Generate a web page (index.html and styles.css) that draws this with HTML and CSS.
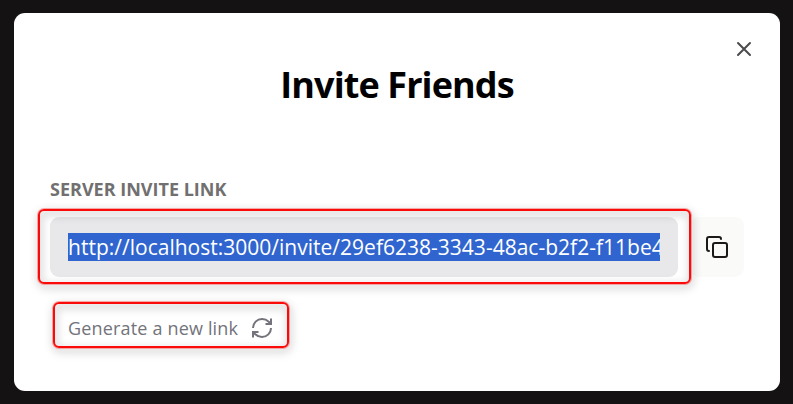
FILE: index.html
```html
<!DOCTYPE html>
<html lang="en">
<head>
<meta charset="utf-8">
<title>Invite Friends</title>
<link rel="stylesheet" href="styles.css">
</head>
<body>
<main class="dialog">
  <button class="close" aria-label="Close">
    <svg viewBox="0 0 24 24" width="24" height="24"><path d="M18 6 6 18M6 6l12 12"/></svg>
  </button>
  <h1 class="title"><span>Invite Friends</span></h1>
  <section class="content">
    <div class="label"><span>Server invite link</span></div>
    <div class="row">
      <div class="field"><div class="clip"><span class="selected">http://localhost:3000/invite/29ef6238-3343-48ac-b2f2-f11be4</span></div></div>
      <button class="copy" aria-label="Copy">
        <svg viewBox="0 0 24 24" width="24" height="24"><rect x="8" y="8" width="14" height="14" rx="2"/><path d="M4 16c-1.1 0-2-.9-2-2V4c0-1.1.9-2 2-2h10c1.1 0 2 .9 2 2"/></svg>
      </button>
      <div class="mark mark-field"></div>
    </div>
    <button class="generate">
      <span>Generate a new link</span>
      <svg class="refresh" viewBox="0 0 24 24" width="24" height="24"><path d="M3 12a9 9 0 0 1 9-9 9.75 9.75 0 0 1 6.74 2.74L21 8"/><path d="M21 2.5V8h-5.5"/><path d="M21 12a9 9 0 0 1-9 9 9.75 9.75 0 0 1-6.74-2.74L3 16"/><path d="M8.5 16H3v5.5"/></svg>
      <i class="mark mark-generate"></i>
    </button>
  </section>
</main>
</body>
</html>
```
FILE: styles.css
```css
* { box-sizing: border-box; }
body {
  margin: 0;
  height: 404px;
  padding: 13px 13px 13px 14px;
  background: #141213;
  font-family: "Open Sans", "Noto Sans", sans-serif;
  overflow: hidden;
}
button {
  border: 0;
  padding: 0;
  background: none;
  font: inherit;
}
svg {
  display: block;
  fill: none;
  stroke: currentColor;
  stroke-width: 2;
  stroke-linecap: round;
  stroke-linejoin: round;
}
.dialog {
  position: relative;
  height: 378px;
  padding-top: 48px;
  background: #fff;
  border-radius: 11px;
}
.close {
  position: absolute;
  top: 24px;
  right: 24px;
  color: #4b4b4f;
}
.title {
  margin: 0;
  line-height: 48px;
  font-size: 36px;
  font-weight: 700;
  letter-spacing: -0.9px;
  text-align: center;
  color: #000;
}
.content { padding: 68px 36px 0; }
.label {
  height: 24px;
  line-height: 24px;
  font-size: 18px;
  font-weight: 700;
  text-transform: uppercase;
  color: #716f70;
}
.row {
  position: relative;
  display: flex;
  gap: 12px;
  margin-top: 16px;
}
.field {
  flex: 1;
  min-width: 0;
  height: 60px;
  padding: 16px 18px;
  border-radius: 9px;
  background: #e8e8ea;
}
.clip {
  height: 28px;
  overflow: hidden;
  background: #3065d0;
  color: #fff;
  font-size: 21px;
  line-height: 28px;
  letter-spacing: 0.01px;
  white-space: nowrap;
}
.copy {
  display: flex;
  align-items: center;
  justify-content: center;
  width: 54px;
  height: 60px;
  border-radius: 9px;
  background: #fafaf9;
  color: #1c1917;
}
.generate {
  position: relative;
  display: flex;
  align-items: center;
  gap: 12px;
  height: 48px;
  margin-top: 27px;
  padding: 0 18px;
  font-size: 18px;
  letter-spacing: 0.17px;
  color: #73737b;
}
.refresh {
  stroke-linecap: butt;
  stroke-linejoin: miter;
}
.mark {
  position: absolute;
  border: 2px solid #fb0a0a;
  border-radius: 6px;
  box-shadow: 0 0 0 1px rgba(255, 0, 0, 0.3);
  filter: drop-shadow(1px 3px 4px rgba(0, 0, 0, 0.4));
  pointer-events: none;
}
.mark-field {
  top: -8px;
  left: -12px;
  width: 653px;
  height: 75px;
}
.mark-generate {
  top: -2px;
  left: 3px;
  width: 236px;
  height: 46px;
}
```
